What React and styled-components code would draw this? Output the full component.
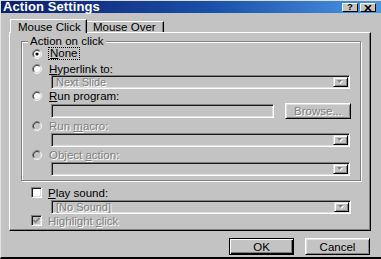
import React from 'react';
import styled, { createGlobalStyle } from 'styled-components';

const FACE = '#c3c3c3';

const Global = createGlobalStyle`
  html, body { margin: 0; padding: 0; background: ${FACE}; }
  body { font-family: "Liberation Sans", Arial, sans-serif; }
`;

const Window = styled.div`
  width: 381px;
  height: 259px;
  box-sizing: border-box;
  background: ${FACE};
  border-top: 1px solid #dcdcdc;
  border-left: 1px solid #e2e2e2;
  border-bottom: 2px solid #000;
  display: flex;
  flex-direction: column;
  font-family: "Liberation Sans", Arial, sans-serif;
  font-size: 11.5px;
  color: #000;
  overflow: hidden;
`;

const TitleBar = styled.div`
  flex: none;
  height: 12px;
  display: flex;
  align-items: center;
  justify-content: space-between;
  padding: 0 5px 0 2px;
  background: linear-gradient(90deg, #0a1e6e 0%, #1a4fa8 55%, #4a96e6 100%);
`;

const Title = styled.span`
  color: #fff;
  font-weight: bold;
  font-size: 13px;
  line-height: 12px;
  letter-spacing: 0.1px;
`;

const CaptionButtons = styled.div`
  display: flex;
  gap: 2px;
  padding-top: 1px;
`;

const CaptionButton = styled.span`
  width: 16px;
  height: 9px;
  box-sizing: border-box;
  background: ${FACE};
  border-top: 1px solid #fff;
  border-left: 1px solid #fff;
  border-right: 1px solid #000;
  border-bottom: 1px solid #000;
  display: flex;
  align-items: center;
  justify-content: center;
  font-size: 9px;
  font-weight: bold;
  line-height: 7px;
  color: #000;
`;

const Body = styled.div`
  flex: 1;
  display: flex;
  flex-direction: column;
  padding: 6px 10px 0 8px;
`;

const TabRow = styled.div`
  display: flex;
  align-items: flex-end;
  height: 13px;
  padding-left: 1px;
  position: relative;
  z-index: 1;
`;

const Tab = styled.div`
  box-sizing: border-box;
  width: ${p => p.$w}px;
  height: ${p => (p.$active ? 14 : 11)}px;
  margin-bottom: ${p => (p.$active ? -1 : 0)}px;
  background: ${FACE};
  border-top: 1px solid #fff;
  border-left: ${p => (p.$active ? '1px solid #fff' : 'none')};
  border-right: 1px solid #000;
  box-shadow: inset -1px 0 #808080;
  padding-left: ${p => p.$pad}px;
  padding-top: ${p => (p.$active ? 1 : 0)}px;
  display: flex;
  align-items: center;
  white-space: nowrap;
`;

const Panel = styled.div`
  box-sizing: border-box;
  height: 199px;
  background: ${FACE};
  border-top: 1px solid #fff;
  border-left: 1px solid #fff;
  border-right: 1px solid #000;
  border-bottom: 1px solid #000;
  box-shadow: inset -1px -1px #808080;
  padding: 2px 9px 0 11px;
  display: flex;
  flex-direction: column;
`;

const GroupBox = styled.fieldset`
  margin: 0;
  padding: 0;
  min-width: 0;
  border: 1px solid #808080;
  box-shadow: inset 1px 1px #fff, 1px 1px #fff;
`;

const Legend = styled.legend`
  margin-left: 6px;
  padding: 0 2px;
  line-height: 12px;
  background: ${FACE};
`;

const GroupContent = styled.div`
  display: flex;
  flex-direction: column;
  padding: 0 0 4px 10px;
`;

const OptionRow = styled.div`
  display: flex;
  align-items: center;
  gap: ${p => (p.$check ? 6 : 7)}px;
  height: 13px;
  margin-top: ${p => p.$mt || 0}px;
  margin-left: ${p => p.$ml || 0}px;
  white-space: nowrap;
  color: ${p => (p.$disabled ? '#808080' : '#000')};
  text-shadow: ${p => (p.$disabled ? '1px 1px #fff' : 'none')};
`;

const Focus = styled.span`
  outline: 1px dotted #000;
  padding: 0 1px;
  line-height: 11px;
`;

const Sunken = styled.div`
  box-sizing: border-box;
  height: 14px;
  margin-top: ${p => p.$mt || 0}px;
  margin-left: ${p => p.$ml || 0}px;
  margin-right: ${p => p.$mr || 0}px;
  flex: ${p => (p.$grow ? 1 : 'none')};
  border-top: 1px solid #808080;
  border-left: 1px solid #808080;
  border-right: 1px solid #fff;
  border-bottom: 1px solid #fff;
  box-shadow: inset 1px 1px #1a1a1a, inset -1px -1px #dfdfdf;
  background: ${FACE};
  display: flex;
  align-items: center;
  padding: 1px;
`;

const FieldText = styled.span`
  flex: 1;
  padding-left: 3px;
  font-size: 11px;
  line-height: 10px;
  color: #808080;
  text-shadow: 1px 1px #fff;
  white-space: nowrap;
`;

const DropButton = styled.span`
  box-sizing: border-box;
  width: 15px;
  height: 10px;
  background: ${FACE};
  border-top: 1px solid #dfdfdf;
  border-left: 1px solid #dfdfdf;
  border-right: 1px solid #000;
  border-bottom: 1px solid #000;
  box-shadow: inset 1px 1px #fff, inset -1px -1px #808080;
  display: flex;
  align-items: center;
  justify-content: center;
`;

const FieldRow = styled.div`
  display: flex;
  align-items: center;
  gap: 11px;
  height: 16px;
  margin-top: 1px;
  margin-left: 19px;
  margin-right: 9px;
`;

const PushButton = styled.button`
  box-sizing: border-box;
  width: ${p => p.$w}px;
  height: ${p => p.$h}px;
  margin: 0;
  padding: 0;
  font-family: inherit;
  font-size: 11.5px;
  background: ${FACE};
  color: ${p => (p.$disabled ? '#808080' : '#000')};
  text-shadow: ${p => (p.$disabled ? '1px 1px #fff' : 'none')};
  border: 1px solid ${p => (p.$default ? '#000' : 'transparent')};
  border-top-color: ${p => (p.$default ? '#000' : '#fff')};
  border-left-color: ${p => (p.$default ? '#000' : '#fff')};
  border-right-color: #000;
  border-bottom-color: #000;
  box-shadow: ${p =>
    p.$default
      ? 'inset 1px 1px #fff, inset -1px -1px #000, inset -2px -2px #808080'
      : 'inset 1px 1px #dfdfdf, inset -1px -1px #808080'};
  cursor: default;
`;

const ButtonRow = styled.div`
  display: flex;
  justify-content: flex-end;
  gap: 11px;
  margin-top: 7px;
  padding-right: 1px;
`;

const CheckBox = styled.span`
  box-sizing: border-box;
  width: 11px;
  height: 11px;
  flex: none;
  border-top: 1px solid #808080;
  border-left: 1px solid #808080;
  border-right: 1px solid #fff;
  border-bottom: 1px solid #fff;
  box-shadow: inset 1px 1px #1a1a1a, inset -1px -1px #dfdfdf;
  background: ${p => (p.$disabled ? FACE : '#fff')};
  display: flex;
  align-items: center;
  justify-content: center;
`;

function Radio({ checked, disabled }) {
  return (
    <svg width="10" height="10" viewBox="0 0 12 12" style={{ flex: 'none' }}>
      <circle cx="6" cy="6" r="4.2" fill={disabled ? FACE : '#fff'} />
      <path d="M2.11 9.89 A5.5 5.5 0 0 1 9.89 2.11" fill="none" stroke="#808080" strokeWidth="1" />
      <path d="M9.89 2.11 A5.5 5.5 0 0 1 2.11 9.89" fill="none" stroke="#fff" strokeWidth="1" />
      <path d="M2.82 9.18 A4.5 4.5 0 0 1 9.18 2.82" fill="none" stroke="#1a1a1a" strokeWidth="1" />
      <path d="M9.18 2.82 A4.5 4.5 0 0 1 2.82 9.18" fill="none" stroke="#dfdfdf" strokeWidth="1" />
      {checked && <circle cx="6" cy="6" r="1.9" fill="#000" />}
    </svg>
  );
}

function Arrow() {
  return (
    <svg width="7" height="5" viewBox="0 0 7 5">
      <path d="M1 1 L6 1 L3.5 4 Z" fill="#fff" />
      <path d="M0 0 L5 0 L2.5 3 Z" fill="#808080" />
    </svg>
  );
}

function Check({ disabled }) {
  return (
    <svg width="7" height="7" viewBox="0 0 7 7">
      <path d="M0.5 3 L2.5 5 L6.5 1" fill="none" stroke={disabled ? '#808080' : '#000'} strokeWidth="1.6" />
    </svg>
  );
}

function Combo({ text, mt, ml, mr }) {
  return (
    <Sunken $mt={mt} $ml={ml} $mr={mr}>
      <FieldText>{text}</FieldText>
      <DropButton>
        <Arrow />
      </DropButton>
    </Sunken>
  );
}

export default function App() {
  return (
    <>
      <Global />
      <Window>
        <TitleBar>
          <Title>Action Settings</Title>
          <CaptionButtons>
            <CaptionButton>?</CaptionButton>
            <CaptionButton>
              <svg width="8" height="6" viewBox="0 0 8 6">
                <path d="M1 0 L7 6 M7 0 L1 6" stroke="#000" strokeWidth="1.6" />
              </svg>
            </CaptionButton>
          </CaptionButtons>
        </TitleBar>
        <Body>
          <TabRow>
            <Tab $active $w={77} $pad={7}>Mouse Click</Tab>
            <Tab $w={77} $pad={6}>Mouse Over</Tab>
          </TabRow>
          <Panel>
            <GroupBox>
              <Legend>Action on click</Legend>
              <GroupContent>
                <OptionRow>
                  <Radio checked />
                  <Focus><u>N</u>one</Focus>
                </OptionRow>
                <OptionRow $mt={2}>
                  <Radio />
                  <span><u>H</u>yperlink to:</span>
                </OptionRow>
                <Combo text="Next Slide" ml={19} mr={10} />
                <OptionRow>
                  <Radio />
                  <span><u>R</u>un program:</span>
                </OptionRow>
                <FieldRow>
                  <Sunken $grow />
                  <PushButton $w={66} $h={16} $disabled>Browse...</PushButton>
                </FieldRow>
                <OptionRow $disabled>
                  <Radio disabled />
                  <span>Run <u>m</u>acro:</span>
                </OptionRow>
                <Combo text="" mt={1} ml={19} mr={10} />
                <OptionRow $mt={1} $disabled>
                  <Radio disabled />
                  <span>Object <u>a</u>ction:</span>
                </OptionRow>
                <Combo text="" mt={1} ml={19} mr={10} />
              </GroupContent>
            </GroupBox>
            <OptionRow $check $mt={5} $ml={10}>
              <CheckBox />
              <span><u>P</u>lay sound:</span>
            </OptionRow>
            <Combo text="[No Sound]" mt={1} ml={30} mr={10} />
            <OptionRow $check $ml={10} $disabled>
              <CheckBox $disabled>
                <Check disabled />
              </CheckBox>
              <span>Highlight <u>c</u>lick</span>
            </OptionRow>
          </Panel>
          <ButtonRow>
            <PushButton $w={65} $h={17} $default>OK</PushButton>
            <PushButton $w={65} $h={17}>Cancel</PushButton>
          </ButtonRow>
        </Body>
      </Window>
    </>
  );
}
